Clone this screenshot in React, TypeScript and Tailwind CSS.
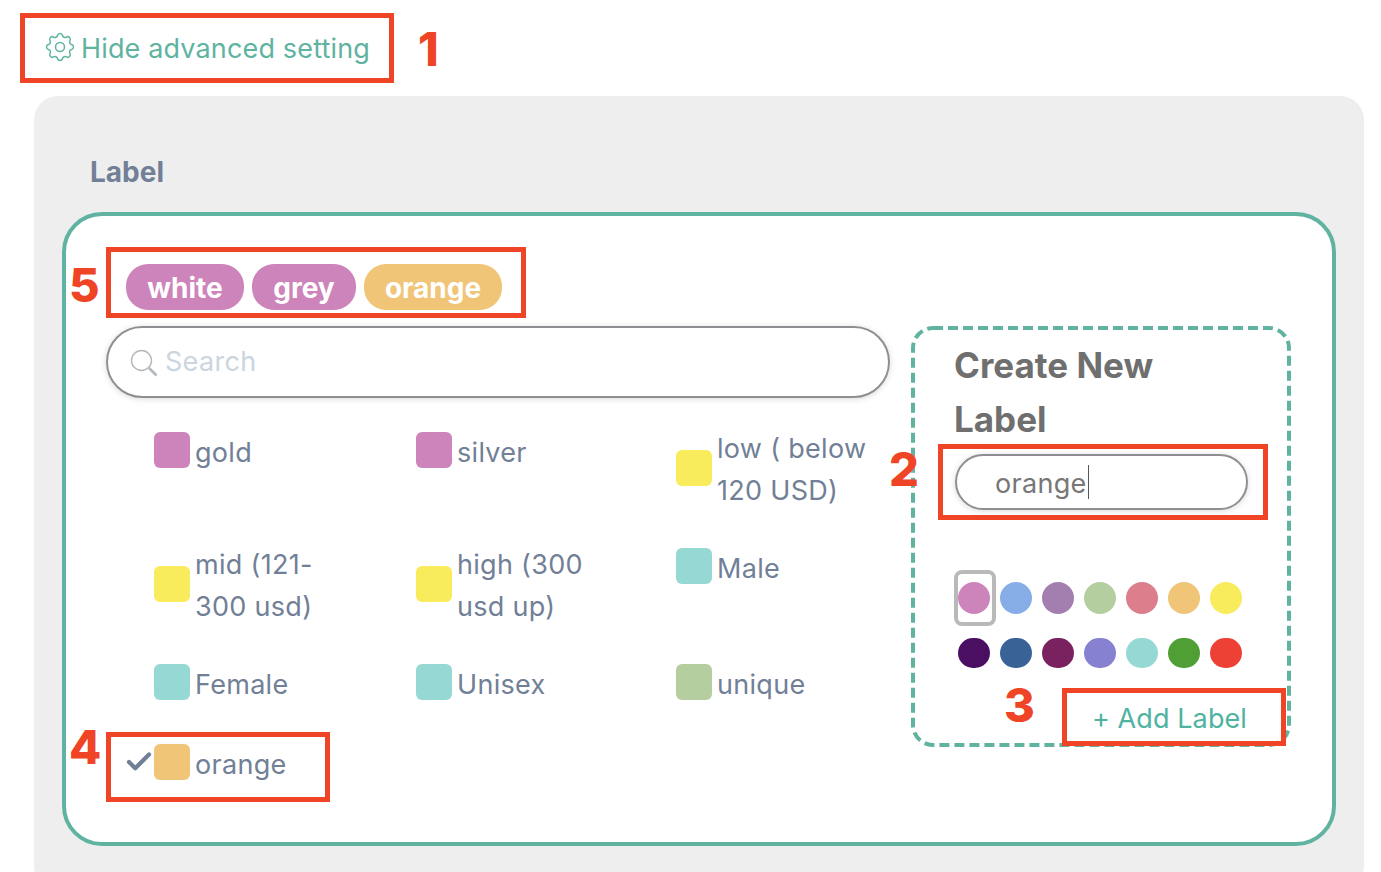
import { Check } from "lucide-react";
import { HiOutlineCog } from "react-icons/hi";

const items = [
  { name: "gold", color: "bg-[#cd84ba]", pad: "pt-[3px]", multi: false },
  { name: "silver", color: "bg-[#cd84ba]", pad: "pt-[3px]", multi: false },
  { name: "low ( below 120 USD)", color: "bg-[#f8ec5c]", pad: "", multi: true },
  { name: "mid (121-300 usd)", color: "bg-[#f8ec5c]", pad: "", multi: true },
  { name: "high (300 usd up)", color: "bg-[#f8ec5c]", pad: "", multi: true },
  { name: "Male", color: "bg-[#96d8d3]", pad: "pt-[3px]", multi: false },
  { name: "Female", color: "bg-[#96d8d3]", pad: "", multi: false },
  { name: "Unisex", color: "bg-[#96d8d3]", pad: "", multi: false },
  { name: "unique", color: "bg-[#b5cea0]", pad: "", multi: false },
  { name: "orange", color: "bg-[#f0c578]", pad: "", multi: false, checked: true },
];

const dotsTop = ["bg-[#cd84ba]", "bg-[#86ade6]", "bg-[#a27fae]", "bg-[#b5cea0]", "bg-[#dc7e8b]", "bg-[#f0c578]", "bg-[#f8ec5c]"];
const dotsBottom = ["bg-[#4b0f62]", "bg-[#396397]", "bg-[#7a2160]", "bg-[#8781d2]", "bg-[#96d8d3]", "bg-[#509f34]", "bg-[#ee4136]"];

// red review marks drawn on top of the screenshot
const marks = [
  "left-[20px] top-[13px] w-[374px] h-[70px]",
  "left-[106px] top-[247px] w-[420px] h-[71px]",
  "left-[938px] top-[444px] w-[330px] h-[76px]",
  "left-[1062px] top-[688px] w-[224px] h-[58px]",
  "left-[106px] top-[732px] w-[224px] h-[70px]",
];

const numbers = [
  { text: "1", pos: "left-[418px] top-[21px]" },
  { text: "5", pos: "left-[69px] top-[257px]" },
  { text: "2", pos: "left-[889px] top-[441px]" },
  { text: "3", pos: "left-[1004px] top-[677px]" },
  { text: "4", pos: "left-[69px] top-[719px]" },
];

const LabelItem = ({ item }: { item: (typeof items)[number] }) => (
  <div className={`flex items-center self-start ${item.pad}`}>
    <div className={`w-[48px] flex justify-end ${item.multi ? "mb-1" : "mb-[5px]"}`}>
      {item.checked && <Check className="w-[30px] h-[30px] text-[#718096]" strokeWidth={3.4} />}
    </div>
    <div className={`w-[36px] h-[36px] rounded-[6px] shrink-0 ${item.multi ? "mb-1" : "mb-[5px]"} ${item.color}`} />
    <span className={`ml-[5px] w-[160px] text-[27px] leading-[42px] tracking-[0.3px] text-[#718096] ${item.multi ? "" : "pt-[1px]"}`}>{item.name}</span>
  </div>
);

export default function App() {
  return (
    <div className="relative h-[872px] w-[1381px] overflow-hidden bg-white font-['Inter',sans-serif]">
      <div className="h-[96px] flex items-center pl-[42px] text-[#60b3a0]">
        <HiOutlineCog className="w-[36px] h-[36px] mb-[2px] [&_path]:stroke-1" />
        <span className="ml-[3px] pt-[2px] text-[27px] tracking-[0.15px]">Hide advanced setting</span>
      </div>

      <div className="ml-[34px] w-[1330px] rounded-[24px] bg-[#eeeeee] pt-[56px] pb-[44px]">
        <div className="pl-[56px] mb-[20px] text-[28px] leading-[40px] font-bold text-[#718096]">Label</div>

        <div className="mx-[28px] h-[634px] rounded-[40px] border-4 border-[#60b3a0] bg-white pl-[40px] pt-[48px]">
          <div className="flex gap-2 pl-[20px] mb-[16px] text-center">
            <span className="w-[118px] h-[46px] rounded-[22px] bg-[#cd84ba] text-white text-[28px] leading-[48px] font-bold">white</span>
            <span className="w-[104px] h-[46px] rounded-[22px] bg-[#cd84ba] text-white text-[28px] leading-[48px] font-bold">grey</span>
            <span className="w-[138px] h-[46px] rounded-[22px] bg-[#f0c578] text-white text-[28px] leading-[48px] font-bold">orange</span>
          </div>

          <div className="flex items-start">
            <div className="w-[784px]">
              <div className="h-[72px] rounded-full border-2 border-[#8e8e93] shadow-[0_1px_6px_rgba(0,0,0,0.15)] flex items-center pl-[22px]">
                <svg viewBox="0 0 28 28" className="w-[28px] h-[28px] mt-[1px]" fill="none" stroke="#b4b7bd">
                  <circle cx="11.5" cy="11.5" r="10" strokeWidth="1.4" />
                  <path d="M19 19l7.5 7.5" strokeWidth="2.6" />
                </svg>
                <span className="ml-[7px] text-[27px] tracking-[0.3px] text-[#cbd5e0]">Search</span>
              </div>

              <div className="mt-[30px] grid grid-cols-[262px_260px_262px] grid-rows-[116px_119px_80px_42px]">
                {items.map((item) => (
                  <LabelItem key={item.name} item={item} />
                ))}
              </div>
            </div>

            <div className="relative ml-[21px] w-[380px] h-[421px] p-[4px] pl-[43px] pt-[12px]">
              <svg className="absolute inset-0 w-full h-full" fill="none">
                <rect x="2" y="2" width="376" height="417" rx="20" stroke="#60b3a0" strokeWidth="4" strokeDasharray="10 5" />
              </svg>
              <div className="w-[260px] text-[35px] leading-[54px] font-bold text-[#6f6f6f]">Create New Label</div>

              <div className="mt-[8px] ml-[1px] w-[293px] h-[56px] rounded-full border-2 border-[#8e8e93] shadow-[0_1px_6px_rgba(0,0,0,0.15)] flex items-center pl-[38px]">
                <span className="pt-[4px] text-[27px] tracking-[0.3px] text-[#777777]">orange</span>
                <span className="ml-[1px] w-[1px] h-[34px] bg-[#555555]" />
              </div>

              <div className="relative mt-[72px] ml-[4px] flex gap-[10px]">
                <div className="absolute -left-[4px] -top-[12px] w-[42px] h-[56px] rounded-[8px] border-4 border-[#b9b9b9]" />
                {dotsTop.map((c) => (
                  <div key={c} className={`relative w-[32px] h-[32px] rounded-full ${c}`} />
                ))}
              </div>
              <div className="mt-[24px] ml-[4px] flex gap-[10px]">
                {dotsBottom.map((c) => (
                  <div key={c} className={`w-[32px] h-[30px] rounded-full ${c}`} />
                ))}
              </div>

              <div className="mt-[30px] pr-[40px] pt-[1px] text-right text-[27px] leading-[40px] tracking-[0.1px] text-[#4fb3a0]">+ Add Label</div>
            </div>
          </div>
        </div>
      </div>

      {marks.map((m) => (
        <div key={m} className={`absolute border-[5px] border-[#ef4426] ${m}`} />
      ))}
      {numbers.map((n) => (
        <span key={n.text} className={`absolute text-[47px] leading-[56px] font-extrabold text-[#ef4426] ${n.pos}`}>{n.text}</span>
      ))}
    </div>
  );
}
